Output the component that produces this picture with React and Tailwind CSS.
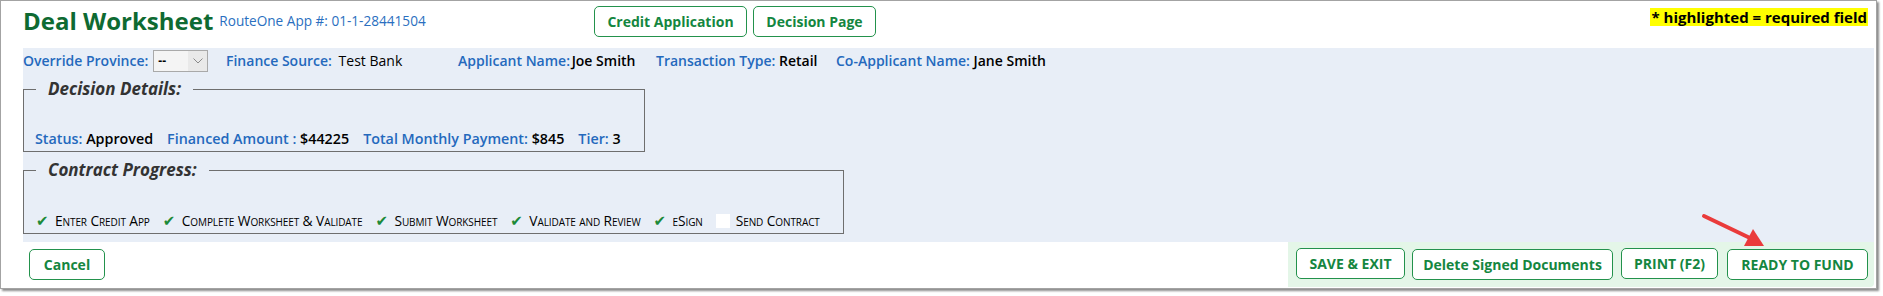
import React from "react"

const Btn = ({ children, className = "" }) => (
  <button
    className={`h-[31px] rounded-[5px] border border-[#23924c] bg-white text-[14px] font-bold text-[#148640] leading-none whitespace-nowrap ${className}`}
  >
    {children}
  </button>
)

const Label = ({ children }) => <span className="text-[#2469bd] font-semibold">{children}</span>

const Check = () => (
  <span className="w-[13px] text-[#1c8a38] text-[15px] font-['DejaVu_Sans',sans-serif] leading-none">✔</span>
)

const steps = [
  { label: "Enter Credit App", done: true },
  { label: "Complete Worksheet & Validate", done: true },
  { label: "Submit Worksheet", done: true },
  { label: "Validate and Review", done: true },
  { label: "eSign", done: true },
  { label: "Send Contract", done: false },
]

export default function App() {
  return (
    <div className="relative w-[1883px] h-[296px] bg-white font-['Open_Sans',sans-serif] text-[14px]">
      <div className="w-[1877px] h-[289px] border border-[#a3a3a3] shadow-[2px_2px_2px_rgba(0,0,0,0.45)] bg-white flex flex-col">
        {/* header */}
        <div className="h-[47px] flex items-start">
          <div className="ml-[22px] w-[571px] flex items-start">
            <h1 className="mt-[4px] text-[24px] font-bold text-[#0e6a32] leading-[32px]">Deal Worksheet</h1>
            <span className="ml-[6px] mt-[10px] text-[13.6px] text-[#2a6fc0] leading-[20px]">RouteOne App #: 01-1-28441504</span>
          </div>
          <div className="mt-[5px] flex gap-[6px]">
            <Btn className="w-[153px] h-[30px]">Credit Application</Btn>
            <Btn className="w-[123px] h-[30px]">Decision Page</Btn>
          </div>
          <span className="ml-auto mr-[8px] mt-[7px] bg-[#ffff00] px-[1px] text-[15px] font-bold leading-[18px] text-black">
            * highlighted = required field
          </span>
        </div>

        {/* main panel */}
        <div className="ml-[22px] mr-[2px] h-[194px] bg-[#e8eef7]">
          <div className="h-[23px] mt-[1px] flex items-center whitespace-nowrap">
            <div className="w-[203px] flex items-center">
              <Label>Override Province:</Label>
              <div className="ml-[5px] w-[55px] h-[22px] border border-[#a9a9a9] bg-[#f4f4f4] flex items-center">
                <span className="pl-[4px] flex-1 text-[12px] font-bold">--</span>
                <span className="w-[19px] h-full bg-[#e9e9e9] flex items-center justify-center">
                  <svg viewBox="0 0 10 6" className="w-[10px] h-[6px]">
                    <path d="M0.5 0.5 L5 5 L9.5 0.5" fill="none" stroke="#8a8a8a" strokeWidth="1" />
                  </svg>
                </span>
              </div>
            </div>
            <div className="w-[232px]">
              <Label>Finance Source:</Label> <span className="ml-[3px] font-medium">Test Bank</span>
            </div>
            <div className="w-[198px]">
              <Label>Applicant Name:</Label> <span className="font-semibold -ml-[2px]">Joe Smith</span>
            </div>
            <div className="w-[180px]">
              <Label>Transaction Type:</Label> <span className="font-semibold">Retail</span>
            </div>
            <div>
              <Label>Co-Applicant Name:</Label> <span className="font-semibold">Jane Smith</span>
            </div>
          </div>

          <fieldset className="mt-[7px] w-[622px] min-w-0 border border-[#6e6e6e] pb-[2px]">
            <legend className="ml-[12px] px-[12px] text-[17px] font-bold italic text-[#333] leading-[20px]">
              Decision Details:
            </legend>
            <div className="pt-[30px] pl-[11px] flex gap-[14px] whitespace-nowrap leading-[20px] text-[14.3px]">
              <span><Label>Status:</Label> <span className="font-semibold">Approved</span></span>
              <span><Label>Financed Amount :</Label> <span className="font-semibold">$44225</span></span>
              <span><Label>Total Monthly Payment:</Label> <span className="font-semibold">$845</span></span>
              <span><Label>Tier:</Label> <span className="font-semibold">3</span></span>
            </div>
          </fieldset>

          <fieldset className="mt-[8px] w-[821px] min-w-0 border border-[#6e6e6e] pb-[2px]">
            <legend className="ml-[12px] px-[12px] text-[17px] font-bold italic text-[#333] leading-[20px]">
              Contract Progress:
            </legend>
            <div className="pt-[31px] pl-[12px] flex items-center whitespace-nowrap leading-[20px] text-[13.8px] tracking-[-0.1px] [font-variant-caps:small-caps]">
              {steps.map((s) => (
                <span key={s.label} className="flex items-center mr-[13px]">
                  {s.done ? <Check /> : <span className="inline-block w-[14px] h-[14px] bg-white" />}
                  <span className="ml-[6px]">{s.label}</span>
                </span>
              ))}
            </div>
          </fieldset>
        </div>

        {/* footer */}
        <div className="flex flex-1">
          <div className="pl-[28px] pt-[7px]">
            <Btn className="w-[76px]">Cancel</Btn>
          </div>
          <div className="ml-auto mr-[2px] mb-[1px] w-[586px] bg-[#e4f6e8] flex justify-end items-start pt-[7px] pr-[6px] rounded-br-[4px]">
            <Btn className="w-[109px] -mt-[1px]">SAVE &amp; EXIT</Btn>
            <Btn className="ml-[7px] w-[201px]">Delete Signed Documents</Btn>
            <Btn className="ml-[8px] w-[97px] -mt-[1px]">PRINT (F2)</Btn>
            <Btn className="ml-[9px] w-[141px]">READY TO FUND</Btn>
          </div>
        </div>
      </div>

      {/* red arrow annotation */}
      <svg className="absolute left-[1700px] top-[210px] w-[70px] h-[40px]" viewBox="0 0 70 40">
        <line x1="4" y1="6" x2="50" y2="28" stroke="#ea3b3b" strokeWidth="4" strokeLinecap="round" />
        <polygon points="64,36 44,36 53,19" fill="#ea3b3b" />
      </svg>
    </div>
  )
}
